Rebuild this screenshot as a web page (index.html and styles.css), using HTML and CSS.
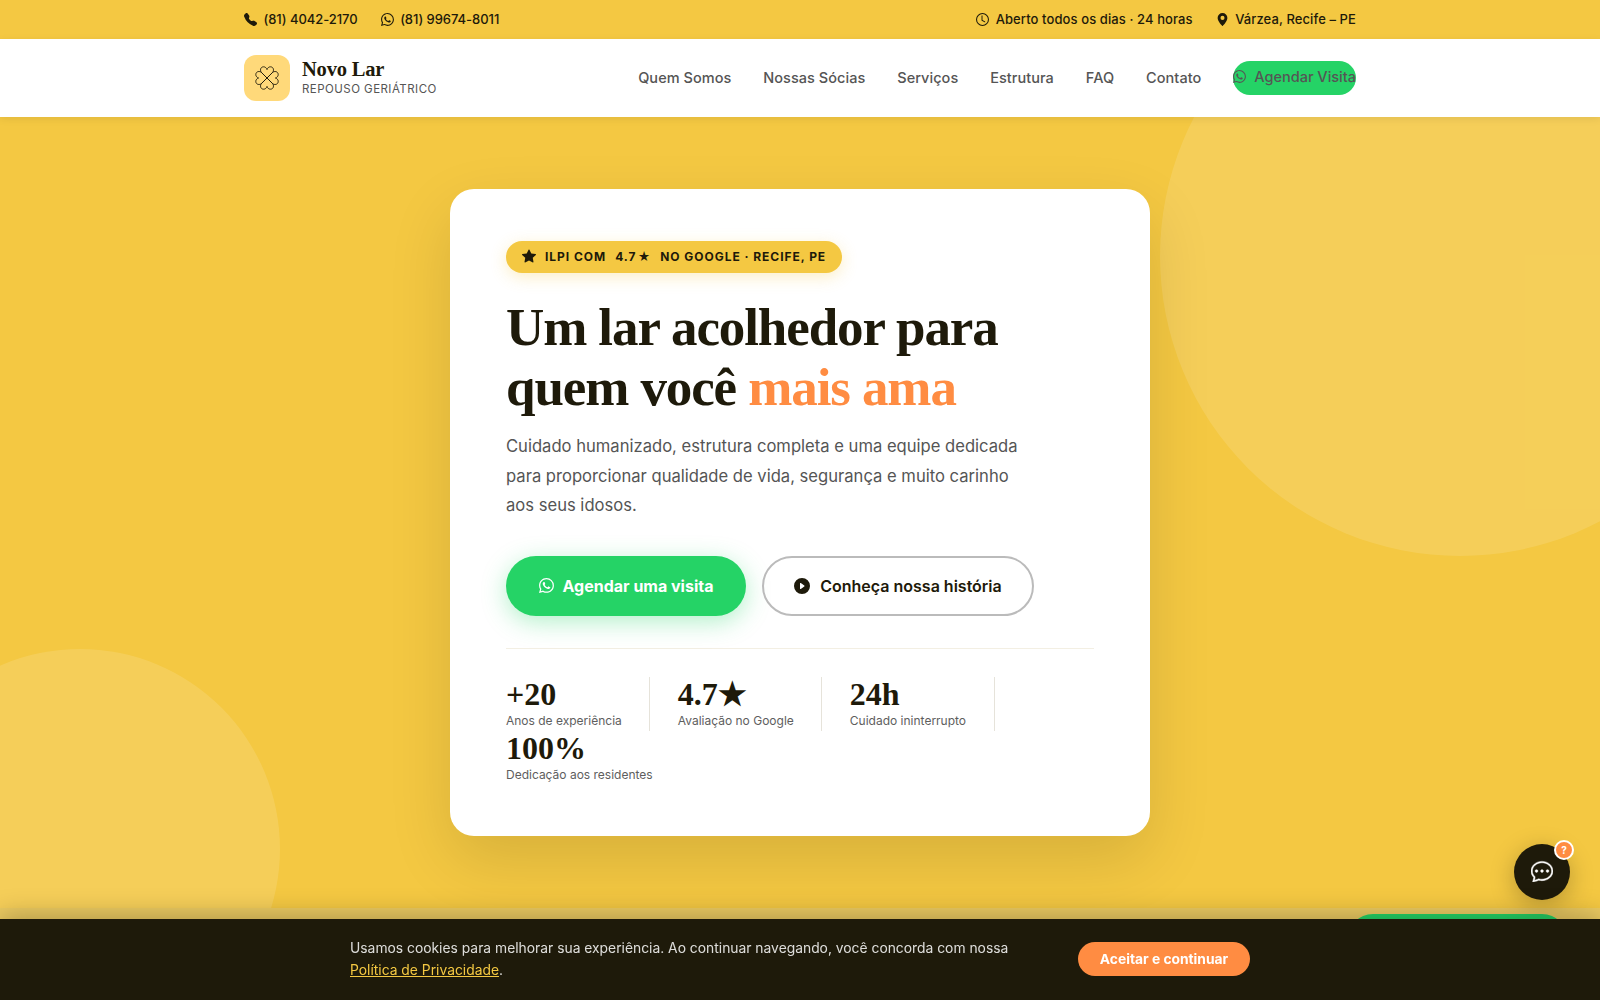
FILE: index.html
```html
<!DOCTYPE html>
<html lang="pt-BR">
<head>
<meta charset="utf-8">
<title>Novo Lar</title>
<link rel="stylesheet" href="styles.css">
</head>
<body>
<svg class="sprite" width="0" height="0" aria-hidden="true">
  <symbol id="i-wa" viewBox="0 0 16 16"><path d="M13.601 2.326A7.854 7.854 0 0 0 7.994 0C3.627 0 .068 3.558.064 7.926c0 1.399.366 2.76 1.057 3.965L0 16l4.204-1.102a7.933 7.933 0 0 0 3.79.965h.004c4.368 0 7.926-3.558 7.93-7.93A7.898 7.898 0 0 0 13.6 2.326zM7.994 14.521a6.573 6.573 0 0 1-3.356-.92l-.24-.144-2.494.654.666-2.433-.156-.251a6.56 6.56 0 0 1-1.007-3.505c0-3.626 2.957-6.584 6.591-6.584a6.56 6.56 0 0 1 4.66 1.931 6.557 6.557 0 0 1 1.928 4.66c-.004 3.639-2.961 6.592-6.592 6.592zm3.615-4.934c-.197-.099-1.17-.578-1.353-.646-.182-.065-.315-.099-.445.099-.133.197-.513.646-.627.775-.114.133-.232.148-.43.05-.197-.1-.836-.308-1.592-.985-.59-.525-.985-1.175-1.103-1.372-.114-.198-.011-.304.088-.403.087-.088.197-.232.296-.346.1-.114.133-.198.198-.33.065-.134.034-.248-.015-.347-.05-.099-.445-1.076-.612-1.47-.16-.389-.323-.335-.445-.34-.114-.007-.247-.007-.38-.007a.729.729 0 0 0-.529.247c-.182.198-.691.677-.691 1.654 0 .977.71 1.916.81 2.049.098.133 1.394 2.132 3.383 2.992.47.205.84.326 1.129.418.475.152.904.129 1.246.08.38-.058 1.171-.48 1.338-.943.164-.464.164-.86.114-.943-.049-.084-.182-.133-.38-.232z"/></symbol>
  <symbol id="i-star" viewBox="0 0 16 16"><path d="M3.612 15.443c-.386.198-.824-.149-.746-.592l.83-4.73L.173 6.765c-.329-.314-.158-.888.283-.95l4.898-.696L7.538.792c.197-.39.73-.39.927 0l2.184 4.327 4.898.696c.441.062.612.636.282.95l-3.522 3.356.83 4.73c.078.443-.36.79-.746.592L8 13.187l-4.389 2.256z"/></symbol>
</svg>

<header class="topbar">
  <div class="wrap topbar-in">
    <div class="top-group top-phones">
      <span class="top-item"><svg class="ti" viewBox="0 0 16 16"><path d="M1.885.511a1.745 1.745 0 0 1 2.61.163L6.29 2.98c.329.423.445.974.315 1.494l-.547 2.19a.678.678 0 0 0 .178.643l2.457 2.457a.678.678 0 0 0 .644.178l2.189-.547a1.745 1.745 0 0 1 1.494.315l2.306 1.794c.829.645.905 1.87.163 2.611l-1.034 1.034c-.74.74-1.846 1.065-2.877.702a18.634 18.634 0 0 1-7.01-4.42 18.634 18.634 0 0 1-4.42-7.009c-.362-1.03-.037-2.137.703-2.877L1.885.511z"/></svg>(81) 4042-2170</span>
      <span class="top-item"><svg class="ti"><use href="#i-wa"/></svg>(81) 99674-8011</span>
    </div>
    <div class="top-group">
      <span class="top-item"><svg class="ti" viewBox="0 0 16 16"><path d="M8 3.5a.6.6 0 0 0-1.2 0V9a.6.6 0 0 0 .3.5l3.5 2a.6.6 0 0 0 .6-1L8 8.65V3.5z"/><path d="M8 16A8 8 0 1 0 8 0a8 8 0 0 0 0 16zm6.7-8A6.7 6.7 0 1 1 1.3 8a6.7 6.7 0 0 1 13.4 0z"/></svg>Aberto todos os dias · 24 horas</span>
      <span class="top-item"><svg class="ti" viewBox="0 0 16 16"><path d="M8 16s6-5.686 6-10A6 6 0 0 0 2 6c0 4.314 6 10 6 10zm0-7.5a2.5 2.5 0 1 1 0-5 2.5 2.5 0 0 1 0 5z"/></svg>Várzea, Recife – PE</span>
    </div>
  </div>
</header>

<nav class="navbar">
  <div class="wrap nav-in">
    <a class="brand" href="#">
      <span class="logo">
        <svg class="clover" viewBox="0 0 24 24">
          <path id="leaf" d="M12 12L6.6 6.6C4.6 4.6 5.4 .8 8.6 .8 10.2 .8 11.4 1.9 12 3.6 12.6 1.9 13.8 .8 15.4 .8 18.6 .8 19.4 4.6 17.4 6.6Z"/>
          <use href="#leaf" transform="rotate(90 12 12)"/>
          <use href="#leaf" transform="rotate(180 12 12)"/>
          <use href="#leaf" transform="rotate(270 12 12)"/>
        </svg>
      </span>
      <span class="brand-text">
        <span class="brand-name">Novo Lar</span>
        <span class="brand-sub">REPOUSO GERIÁTRICO</span>
      </span>
    </a>
    <div class="nav-links">
      <a href="#">Quem Somos</a>
      <a href="#">Nossas Sócias</a>
      <a href="#">Serviços</a>
      <a href="#">Estrutura</a>
      <a href="#">FAQ</a>
      <a href="#">Contato</a>
      <a href="#" class="nav-cta"><svg class="ti"><use href="#i-wa"/></svg>Agendar Visita</a>
    </div>
  </div>
</nav>

<main class="hero">
  <div class="circle circle-a"></div>
  <div class="circle circle-b"></div>
  <section class="card">
    <div class="badge"><svg class="badge-star"><use href="#i-star"/></svg><span>ILPI com</span><span class="rate">4.7 ★</span><span>no Google · Recife, PE</span></div>
    <h1>Um lar acolhedor para<br>quem você <em>mais ama</em></h1>
    <p class="lead">Cuidado humanizado, estrutura completa e uma equipe dedicada para proporcionar qualidade de vida, segurança e muito carinho aos seus idosos.</p>
    <div class="actions">
      <a href="#" class="btn btn-green"><svg class="bi"><use href="#i-wa"/></svg>Agendar uma visita</a>
      <a href="#" class="btn btn-ghost"><svg class="bi" viewBox="0 0 16 16"><path d="M16 8A8 8 0 1 1 0 8a8 8 0 0 1 16 0zM6.79 5.093A.5.5 0 0 0 6 5.5v5a.5.5 0 0 0 .79.407l3.5-2.5a.5.5 0 0 0 0-.814l-3.5-2.5z"/></svg>Conheça nossa história</a>
    </div>
    <div class="stats">
      <div class="stat"><div class="num">+20</div><div class="lab">Anos de experiência</div></div>
      <div class="stat"><div class="num">4.7★</div><div class="lab">Avaliação no Google</div></div>
      <div class="stat"><div class="num">24h</div><div class="lab">Cuidado ininterrupto</div></div>
      <div class="stat stat-last"><div class="num">100%</div><div class="lab">Dedicação aos residentes</div></div>
    </div>
  </section>
</main>
<div class="next-strip"></div>

<a href="#" class="float-wa"></a>
<a href="#" class="float-chat">
  <svg viewBox="0 0 16 16"><path d="M5 8a1 1 0 1 1-2 0 1 1 0 0 1 2 0zm4 0a1 1 0 1 1-2 0 1 1 0 0 1 2 0zm3 1a1 1 0 1 0 0-2 1 1 0 0 0 0 2z"/><path d="m2.165 15.803.02-.004c1.83-.363 2.948-.842 3.468-1.105A9.06 9.06 0 0 0 8 15c4.418 0 8-3.134 8-7s-3.582-7-8-7-8 3.134-8 7c0 1.76.743 3.37 1.97 4.6a10.437 10.437 0 0 1-.524 2.318l-.003.011a10.722 10.722 0 0 1-.244.637c-.079.186.074.394.273.362a21.673 21.673 0 0 0 .693-.125zm.8-3.108a1 1 0 0 0-.287-.801C1.618 10.83 1 9.468 1 8c0-3.192 3.004-6 7-6s7 2.808 7 6c0 3.193-3.004 6-7 6a8.06 8.06 0 0 1-2.088-.272 1 1 0 0 0-.711.074c-.387.196-1.24.57-2.634.893a10.97 10.97 0 0 0 .398-2z"/></svg>
  <span class="chat-badge">?</span>
</a>

<div class="cookie">
  <div class="cookie-in">
    <p>Usamos cookies para melhorar sua experiência. Ao continuar navegando, você concorda com nossa <a href="#">Política de Privacidade</a>.</p>
    <button class="cookie-btn" type="button">Aceitar e continuar</button>
  </div>
</div>
</body>
</html>
```
FILE: styles.css
```css
* { box-sizing: border-box; margin: 0; padding: 0; }
html, body { height: 100%; overflow: hidden; }
body { font-family: Inter, "Liberation Sans", sans-serif; color: #1e1a0a; background: #fff; }
a { color: inherit; text-decoration: none; }
.sprite { position: absolute; }
.wrap { width: 1112px; margin: 0 auto; }

.topbar { background: #f4c842; height: 39px; font-size: 13px; font-weight: 500; letter-spacing: .1px; }
.topbar-in { display: flex; justify-content: space-between; align-items: center; height: 100%; padding-bottom: 1px; }
.top-group { display: flex; gap: 23px; }
.top-phones { letter-spacing: -.05px; }
.top-item { display: flex; align-items: center; gap: 6.5px; }
.ti { width: 13px; height: 13px; fill: currentColor; flex: none; }

.navbar { background: #fff; height: 78px; position: relative; z-index: 2; box-shadow: 0 2px 8px rgba(0,0,0,.08); }
.nav-in { display: flex; justify-content: space-between; align-items: center; height: 100%; }
.brand { display: flex; align-items: center; gap: 12px; }
.logo { width: 46px; height: 46px; border-radius: 12px; background: #ffd97a; display: flex; align-items: center; justify-content: center; }
.clover { width: 24px; height: 24px; fill: none; stroke: #1e1a0a; stroke-width: .9; }
.brand-text { display: flex; flex-direction: column; padding-bottom: 3px; }
.brand-name { font-family: "Liberation Serif", serif; font-weight: 700; font-size: 20.5px; line-height: 25px; letter-spacing: -.2px; }
.brand-sub { font-size: 11.5px; line-height: 14px; letter-spacing: .04em; color: #555; }
.nav-links { display: flex; align-items: center; gap: 32px; font-size: 14.5px; font-weight: 500; letter-spacing: .04px; color: #555; padding-bottom: 1px; }
.nav-cta { display: flex; align-items: center; gap: 8px; height: 34px; border-radius: 17px; background: #25d366; padding-bottom: 2px; letter-spacing: 0; }
.nav-cta .ti { width: 13px; height: 13px; }

.hero { position: relative; overflow: hidden; background: #f4c842; padding: 72px 0; display: flex; justify-content: center; }
.circle { position: absolute; border-radius: 50%; background: rgba(255,255,255,.12); }
.circle-a { width: 600px; height: 600px; top: -161px; right: -160px; }
.circle-b { width: 400px; height: 400px; left: -120px; bottom: -141px; }
.card { position: relative; width: 700px; background: #fff; border-radius: 24px; padding: 52px 56px 51px; box-shadow: 0 24px 64px rgba(0,0,0,.12); }

.badge { display: inline-flex; align-items: center; gap: 9px; height: 32px; padding: 0 16px 2px; border-radius: 16px; background: #f4c842; font-size: 12px; font-weight: 700; letter-spacing: .08em; text-transform: uppercase; box-shadow: 0 4px 16px rgba(244,200,66,.3); }
.badge-star { width: 14px; height: 14px; fill: currentColor; }
.rate { word-spacing: -2.5px; }

h1 { font-family: "Liberation Serif", serif; font-weight: 700; font-size: 53px; line-height: 60px; margin-top: 24px; letter-spacing: -1.1px; }
h1 em { font-style: normal; color: #ff8c42; }
.lead { font-size: 16.6px; line-height: 29.7px; color: #555; max-width: 530px; margin-top: 15px; }

.actions { display: flex; gap: 16px; margin-top: 35px; }
.btn { display: flex; align-items: center; justify-content: center; gap: 10px; height: 60px; border-radius: 30px; font-size: 16px; padding-bottom: 1px; }
.bi { width: 16px; height: 16px; fill: currentColor; }
.btn-green { width: 240px; gap: 9px; background: #25d366; color: #fff; font-weight: 700; box-shadow: 0 6px 24px rgba(37,211,102,.35); }
.btn-green .bi { width: 15px; height: 15px; }
.btn-ghost { width: 272px; border: 2px solid #bbb; font-weight: 600; }

.stats { display: flex; flex-wrap: wrap; margin-top: 32px; padding-top: 28px; border-top: 1px solid #f3efe3; }
.stat { padding-right: 27.5px; margin-right: 27.5px; border-right: 1px solid #e6e3da; height: 54px; }
.stat-last { border-right: 0; }
.num { font-family: "Liberation Serif", serif; font-weight: 700; font-size: 32px; line-height: 34px; }
.lab { font-size: 12px; line-height: 20px; color: #5e5e5e; }

.next-strip { height: 200px; background: #eccb62; }

.float-wa { position: fixed; right: 32px; top: 914px; width: 221px; height: 52px; border-radius: 26px; background: #25d366; z-index: 5; }
.float-chat { position: fixed; right: 30px; bottom: 100px; width: 56px; height: 56px; border-radius: 50%; background: #1e1a0a; color: #fff; display: flex; align-items: center; justify-content: center; z-index: 6; box-shadow: 0 6px 24px rgba(0,0,0,.25); padding-bottom: 2px; }
.float-chat svg { width: 22px; height: 22px; fill: currentColor; stroke: currentColor; stroke-width: .35; }
.chat-badge { position: absolute; top: -4px; right: -4px; width: 20px; height: 20px; border-radius: 50%; border: 2px solid #fff; background: #ff8c42; color: #fff; font-size: 10px; font-weight: 700; display: flex; align-items: center; justify-content: center; }

.cookie { position: fixed; left: 0; right: 0; bottom: 0; height: 81px; padding-bottom: 2px; background: #1e1a0a; color: rgba(255,255,255,.85); z-index: 7; box-shadow: 0 -4px 24px rgba(0,0,0,.25); display: flex; justify-content: center; align-items: center; }
.cookie-in { width: 900px; display: flex; justify-content: space-between; align-items: center; gap: 32px; }
.cookie p { font-size: 13.85px; line-height: 22px; }
.cookie p a { color: #f4c842; text-decoration: underline; }
.cookie-btn { flex: none; width: 172px; height: 34px; border: 0; border-radius: 17px; background: #ff8c42; color: #fff; font-family: inherit; font-size: 13.8px; font-weight: 700; }
```
